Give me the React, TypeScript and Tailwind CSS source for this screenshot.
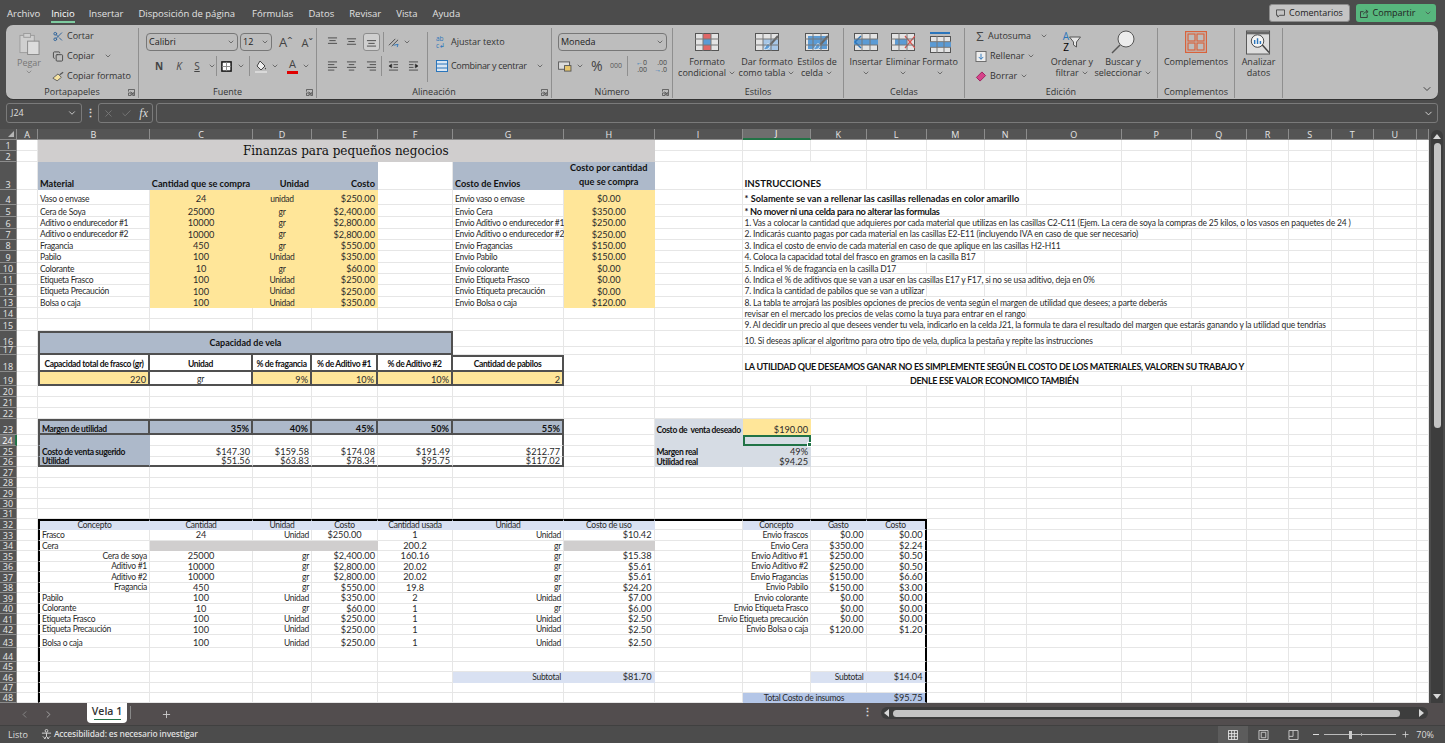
import type { ReactNode } from "react";
import { twMerge } from "tailwind-merge";
import { Check, ChevronDown, ChevronLeft, ChevronRight, Copy, Plus, Scissors, X } from "lucide-react";

type Cell = { t?: string; c?: string; s?: number; r?: number };

const LETTERS = "A B C D E F G H I J K L M N O P Q R S T U".split(" ").concat("");

// sheet fills
const BB = "font-bold text-[#111] text-[8.5px]/none tracking-[-0.35px]";
const YEL = "bg-[#ffe699] border-[#ffe699]";
const BLU = `bg-[#adb9ca] border-[#adb9ca] ${BB}`;
const PALE = "bg-[#d9e1f2] border-[#d9e1f2]";
const GRY = "bg-[#d0cece] border-[#d0cece]";
const STEEL = "bg-[#d6dce4] border-[#d6dce4]";
const CC = "justify-center";
const RR = "justify-end";
const H3 = "text-[9.2px]/none tracking-normal";
const INS = "text-[9.2px]/none tracking-normal";
const LINE = "tracking-[-0.17px]";
// dark boxed tables
const BOX = "border-r-2 border-b-2 border-r-[#505050] border-b-[#505050]";
const BL = "border-l-2 border-l-[#505050]";
const BT = "border-t-2 border-t-[#505050]";
// big black frame
const FL = "border-l-2 border-l-black";
const FR = "border-r-2 border-r-black";
const FT = "border-t-2 border-t-black";

const materials = [
  ["Cera de Soya", "25000", "gr", "$2,400.00", "Envio Cera", "$350.00", "* No mover ni una celda para no alterar las formulas", 4, `${BB} text-[9.2px]/none tracking-[-0.28px]`],
  ["Aditivo o endurecedor #1", "10000", "gr", "$2,800.00", "Envio Aditivo o endurecedor #1", "$250.00", "1. Vas a colocar la cantidad que adquieres por cada material que utilizas en las casillas C2-C11 (Ejem. La cera de soya la compras de 25 kilos, o los vasos en paquetes de 24 )", 11, LINE],
  ["Aditivo o endurecedor #2", "10000", "gr", "$2,800.00", "Envio Aditivo o endurecedor #2", "$250.00", "2. Indicarás cuanto pagas por cada material en las casillas E2-E11 (incluyendo IVA en caso de que ser necesario)", 7, LINE],
  ["Fragancia", "450", "gr", "$550.00", "Envio Fragancias", "$150.00", "3. Indica el costo de envio de cada material en caso de que aplique en las casillas H2-H11", 6, LINE],
  ["Pabilo", "100", "Unidad", "$350.00", "Envio Pabilo", "$150.00", "4. Coloca la capacidad total del frasco en gramos en la casilla B17", 4, LINE],
  ["Colorante", "10", "gr", "$60.00", "Envio colorante", "$0.00", "5. Indica el % de fragancia en la casilla D17", 3, LINE],
  ["Etiqueta Frasco", "100", "Unidad", "$250.00", "Envio Etiqueta Frasco", "$0.00", "6. Indica el % de aditivos que se van a usar en las casillas E17 y F17, si no se usa aditivo, deja en 0%", 6, LINE],
  ["Etiqueta Precaución", "100", "Unidad", "$250.00", "Envio Etiqueta precaución", "$0.00", "7. Indica la cantidad de pabilos que se van a utilizar", 3, LINE],
  ["Bolsa o caja", "100", "Unidad", "$350.00", "Envio Bolsa o caja", "$120.00", "8. La tabla te arrojará las posibles opciones de precios de venta según el margen de utilidad que desees; a parte deberás", 7, LINE],
] as const;

const usage = [
  ["Frasco", "24", "Unidad", "$250.00", "1", "Unidad", "$10.42", "Envio frascos", "$0.00", "$0.00"],
  ["Cera", "", "", "", "200.2", "gr", "", "Envio Cera", "$350.00", "$2.24"],
  [">Cera de soya", "25000", "gr", "$2,400.00", "160.16", "gr", "$15.38", "Envio Aditivo #1", "$250.00", "$0.50"],
  [">Aditivo #1", "10000", "gr", "$2,800.00", "20.02", "gr", "$5.61", "Envio Aditivo #2", "$250.00", "$0.50"],
  [">Aditivo #2", "10000", "gr", "$2,800.00", "20.02", "gr", "$5.61", "Envio Fragancias", "$150.00", "$6.60"],
  [">Fragancia", "450", "gr", "$550.00", "19.8", "gr", "$24.20", "Envio Pabilo", "$150.00", "$3.00"],
  ["Pabilo", "100", "Unidad", "$350.00", "2", "Unidad", "$7.00", "Envio colorante", "$0.00", "$0.00"],
  ["Colorante", "10", "gr", "$60.00", "1", "gr", "$6.00", "Envio Etiqueta Frasco", "$0.00", "$0.00"],
  ["Etiqueta Frasco", "100", "Unidad", "$250.00", "1", "Unidad", "$2.50", "Envio Etiqueta precaución", "$0.00", "$0.00"],
  ["Etiqueta Precaución", "100", "Unidad", "$250.00", "1", "Unidad", "$2.50", "Envio Bolsa o caja", "$120.00", "$1.20"],
  ["Bolsa o caja", "100", "Unidad", "$250.00", "1", "Unidad", "$2.50", "", "", ""],
];

function buildRows(): Record<number, { cells: Cell[]; occ?: number }> {
  const rows: Record<number, { cells: Cell[]; occ?: number }> = {};
  const blank: Cell = {};

  rows[1] = {
    cells: [
      blank,
      { t: "Finanzas para pequeños negocios", s: 7, r: 2, c: `${GRY} ${CC} items-center text-[12px]/none tracking-normal text-[#111] font-['DejaVu_Serif',serif]` },
    ],
  };
  rows[2] = { cells: [blank], occ: 7 };
  rows[3] = {
    cells: [
      blank,
      { t: "Material", c: `${BLU} ${H3}` },
      { t: "Cantidad que se compra", c: `${BLU} ${H3} ${CC}` },
      { t: "Unidad", c: `${BLU} ${H3} ${RR}` },
      { t: "Costo", c: `${BLU} ${H3} ${RR}` },
      blank,
      { t: "Costo de Envios", c: `${BLU} ${H3}` },
      { t: "Costo por cantidad que se compra", c: `${BLU} ${CC} text-center whitespace-normal text-[9.2px]/[14px] tracking-normal` },
      blank,
      { t: "INSTRUCCIONES", s: 2, c: `${BB} text-[9.7px]/none tracking-normal` },
    ],
  };
  rows[4] = {
    cells: [
      blank,
      { t: "Vaso o envase", c: "pb-[1px]" },
      { t: "24", c: `${YEL} ${CC} pb-[1px]` },
      { t: "unidad", c: `${YEL} ${CC} pb-[1px]` },
      { t: "$250.00", c: `${YEL} ${RR} pb-[1px]` },
      blank,
      { t: "Envio vaso o envase", c: "pb-[1px]" },
      { t: "$0.00", c: `${YEL} ${CC} pb-[1px]` },
      blank,
      { t: "* Solamente se van a rellenar las casillas rellenadas en color amarillo", s: 5, c: `${BB} ${INS} pb-[1px]` },
    ],
  };
  materials.forEach((m, i) => {
    rows[5 + i] = {
      cells: [
        blank,
        { t: m[0] },
        { t: m[1], c: `${YEL} ${CC}` },
        { t: m[2], c: `${YEL} ${CC}` },
        { t: m[3], c: `${YEL} ${RR}` },
        blank,
        { t: m[4] },
        { t: m[5], c: `${YEL} ${CC}` },
        blank,
        { t: m[6], s: m[7], c: m[8] },
      ],
    };
  });
  rows[14] = {
    cells: [
      ...Array(9).fill(blank),
      { t: "revisar en el mercado los precios de velas como la tuya para entrar en el rango", s: 5, c: "tracking-[-0.1px]" },
    ],
  };
  rows[15] = {
    cells: [
      ...Array(9).fill(blank),
      { t: "9. Al decidir un precio al que desees vender tu vela, indicarlo en la celda J21, la formula te dara el resultado del margen que estarás ganando y la utilidad que tendrías", s: 10, c: LINE },
    ],
  };
  rows[16] = {
    cells: [
      blank,
      { t: "Capacidad de vela", s: 5, r: 2, c: `${BLU} ${CC} items-center ${BOX} ${BL} ${BT} text-[9px]/none tracking-normal` },
      blank,
      blank,
      blank,
      { t: "10. Si deseas aplicar el algoritmo para otro tipo de vela, duplica la pestaña y repite las instrucciones", s: 6, c: `${LINE} pb-[1px]` },
    ],
  };
  rows[17] = { cells: [blank], occ: 5 };
  const head = `${CC} ${BB} pb-[1px] ${BOX}`;
  const shout = `${BB} ${CC} text-[9px]/none tracking-[-0.3px]`;
  rows[18] = {
    cells: [
      blank,
      { t: "Capacidad total de frasco (gr)", c: `${head} ${BL}` },
      { t: "Unidad", c: head },
      { t: "% de fragancia", c: head },
      { t: "% de Aditivo #1", c: head },
      { t: "% de Aditivo #2", c: head },
      { t: "Cantidad de pabilos", c: `${head} ${BT}` },
      blank,
      blank,
      { t: "LA UTILIDAD QUE DESEAMOS GANAR NO ES SIMPLEMENTE SEGÚN EL COSTO DE LOS MATERIALES, VALOREN SU TRABAJO Y", s: 8, c: shout },
    ],
  };
  rows[19] = {
    cells: [
      blank,
      { t: "220", c: `${YEL} ${RR} ${BOX} ${BL}` },
      { t: "gr", c: `${CC} ${BOX}` },
      { t: "9%", c: `${YEL} ${RR} ${BOX}` },
      { t: "10%", c: `${YEL} ${RR} ${BOX}` },
      { t: "10%", c: `${YEL} ${RR} ${BOX}` },
      { t: "2", c: `${YEL} ${RR} ${BOX}` },
      blank,
      blank,
      { t: "DENLE ESE VALOR ECONOMICO TAMBIÉN", s: 8, c: shout },
    ],
  };
  const mrg = `${BLU} ${RR} ${BT} ${BOX} text-[9.2px]/none tracking-normal`;
  rows[23] = {
    cells: [
      blank,
      { t: "Margen de utilidad", c: `${BLU} ${BT} ${BOX} ${BL}` },
      { t: "35%", c: mrg },
      { t: "40%", c: mrg },
      { t: "45%", c: mrg },
      { t: "50%", c: mrg },
      { t: "55%", c: mrg },
      blank,
      { t: "Costo de  venta deseado", c: `${STEEL} ${BB} whitespace-pre` },
      { t: "$190.00", c: `${YEL} ${RR}` },
    ],
  };
  rows[24] = {
    cells: [
      blank,
      { c: `${BLU} ${BL}` },
      blank,
      blank,
      blank,
      blank,
      { c: "border-r-2 border-r-[#505050]" },
      blank,
      { c: STEEL },
      { c: `${STEEL} relative border-2 border-[#217346] z-10` },
    ],
  };
  rows[25] = {
    cells: [
      blank,
      { t: "Costo de venta sugerido", c: `${BLU} ${BL}` },
      { t: "$147.30", c: RR },
      { t: "$159.58", c: RR },
      { t: "$174.08", c: RR },
      { t: "$191.49", c: RR },
      { t: "$212.77", c: `${RR} border-r-2 border-r-[#505050]` },
      blank,
      { t: "Margen real", c: `${STEEL} ${BB}` },
      { t: "49%", c: `${STEEL} ${RR}` },
    ],
  };
  const btm = `${RR} border-b-2 border-b-[#505050]`;
  rows[26] = {
    cells: [
      blank,
      { t: "Utilidad", c: `${BLU} ${BL} border-b-2 border-b-[#505050]` },
      { t: "$51.56", c: btm },
      { t: "$63.83", c: btm },
      { t: "$78.34", c: btm },
      { t: "$95.75", c: btm },
      { t: "$117.02", c: `${btm} border-r-2 border-r-[#505050]` },
      blank,
      { t: "Utilidad real", c: `${STEEL} ${BB}` },
      { t: "$94.25", c: `${STEEL} ${RR}` },
    ],
  };
  const top = `${PALE} ${CC} ${FT}`;
  rows[32] = {
    cells: [
      blank,
      { t: "Concepto", c: `${top} ${FL}` },
      { t: "Cantidad", c: top },
      { t: "Unidad", c: top },
      { t: "Costo", c: top },
      { t: "Cantidad usada", c: top },
      { t: "Unidad", c: top },
      { t: "Costo de uso", c: top },
      { c: FT },
      { t: "Concepto", c: top },
      { t: "Gasto", c: top },
      { t: "Costo", c: `${top} ${FR}` },
    ],
  };
  usage.forEach((u, i) => {
    const indent = u[0].startsWith(">");
    const cera = u[0] === "Cera";
    rows[33 + i] = {
      cells: [
        blank,
        { t: indent ? u[0].slice(1) : u[0], c: `${FL} ${indent ? RR : ""}` },
        ...(cera
          ? [{ s: 3, c: GRY }]
          : [
              { t: u[1], c: CC },
              { t: u[2], c: RR },
              { t: u[3], c: i === 0 ? CC : RR },
            ]),
        { t: u[4], c: CC },
        { t: u[5], c: RR },
        { t: u[6], c: cera ? GRY : RR },
        blank,
        { t: u[7], c: RR },
        { t: u[8], c: RR },
        { t: u[9], c: `${RR} ${FR}` },
      ],
    };
  });
  const framed = (n: number, extra: Cell[]) => {
    rows[n] = { cells: [blank, { c: FL }, ...extra] };
  };
  const plain = Array(9).fill(blank) as Cell[];
  framed(44, [...plain, { c: FR }]);
  framed(45, [...plain, { c: FR }]);
  framed(46, [
    ...Array(4).fill(blank),
    { t: "Subtotal", c: `${PALE} ${RR}` },
    { t: "$81.70", c: `${PALE} ${RR}` },
    blank,
    blank,
    { t: "Subtotal", c: `${PALE} ${RR}` },
    { t: "$14.04", c: `${PALE} ${RR} ${FR}` },
  ]);
  framed(47, [...plain, { c: FR }]);
  framed(48, [
    ...Array(7).fill(blank),
    { t: "Total Costo de insumos", s: 2, c: `bg-[#b4c6e7] border-[#b4c6e7] ${CC}` },
    { t: "$95.75", c: `bg-[#b4c6e7] border-[#b4c6e7] ${RR} ${FR}` },
  ]);
  return rows;
}

const HDR = "flex justify-center bg-[#545454] border-r border-b border-[#8c8c8c] text-[#e6e6e6] text-[9px]/none font-['Open_Sans',sans-serif]";
const NUM = /^\$?[\d.,]+%?$/;

function Sheet() {
  const rows = buildRows();
  const base = "flex items-end px-[2px] whitespace-nowrap text-[8.5px]/none tracking-[-0.28px] text-[#2a2a2a] bg-white border-r border-b border-[#e6e6e6] min-w-0";
  return (
    <div className="grid grid-cols-[17px_21px_112px_103px_59px_66px_75px_111px_90.5px_88px_68.5px_55.5px_60px_58.5px_41.5px_95.5px_69.5px_55.5px_42px_42.5px_42.5px_42.5px_12.5px] grid-rows-[11px_11px_11px_27.5px_15.5px_12.3px_11.35px_11.35px_11.35px_11.35px_11.35px_11.35px_11.35px_11.35px_11.35px_11.35px_16.3px_8px_16.7px_14px_10.8px_11px_11.2px_16.3px_11px_11px_10.3px_10.4px_10.6px_10.7px_10px_10.5px_10.8px_10.4px_10.6px_10.4px_10.3px_10.7px_10.3px_10.7px_10.3px_10.7px_10.3px_13.3px_13.4px_10.6px_10.4px_10.3px_10.5px] font-['Lato',sans-serif]">
      <div className={`${HDR} relative`}>
        <span className="absolute right-[2px] bottom-[2px] w-0 h-0 border-l-[6px] border-l-transparent border-b-[6px] border-b-[#b5b5b5]" />
      </div>
      {LETTERS.map((l) => (
        <div key={l || "end"} className={twMerge(HDR, "items-center", l === "J" ? "bg-[#6e6e6e] border-b-2 border-b-[#217346] text-white" : "")}>
          {l}
        </div>
      ))}
      {Array.from({ length: 48 }, (_, i) => i + 1).flatMap((n) => {
        const def = rows[n] ?? { cells: [] as Cell[] };
        const used = def.cells.reduce((sum, c) => sum + (c.s ?? 1), 0) + (def.occ ?? 0);
        const cells = [...def.cells, ...Array<Cell>(Math.max(0, 22 - used)).fill({})];
        return [
          <div key={`h${n}`} className={twMerge(HDR, "items-end", n === 24 ? "bg-[#6e6e6e] border-r-2 border-r-[#217346] text-white" : "")}>
            {n}
          </div>,
          ...cells.map((c, j) => (
            <div
              key={`${n}-${j}`}
              className={twMerge(base, SPANS[c.s ?? 1], c.r === 2 ? "row-span-2" : "", c.t && NUM.test(c.t) ? "text-[9.2px]/none tracking-normal" : "", c.c)}
            >
              {c.t}
              {n === 24 && j === 9 && <span className="absolute -right-[3px] -bottom-[3px] w-[5px] h-[5px] bg-[#217346] border border-white" />}
            </div>
          )),
        ];
      })}
    </div>
  );
}

const SPANS: Record<number, string> = {
  1: "",
  2: "col-span-2",
  3: "col-span-3",
  4: "col-span-4",
  5: "col-span-5",
  6: "col-span-6",
  7: "col-span-7",
  8: "col-span-8",
  10: "col-span-10",
  11: "col-span-11",
};

/* ribbon bits */
const Chev = ({ c = "" }: { c?: string }) => <ChevronDown size={8} strokeWidth={2} className={twMerge("text-[#444] shrink-0", c)} />;

function Launcher() {
  return (
    <svg viewBox="0 0 8 8" className="absolute right-[3px] bottom-[2px] w-[7px] h-[7px]" fill="none" stroke="#555" strokeWidth="1">
      <path d="M.5 3V.5H7.5V7.5H5M.5 4.5H3.5V7.5H.5ZM3 3L6 6M6 3.5V6H3.5" />
    </svg>
  );
}

function Group({ label, w, launcher, children }: { label?: string; w: string; launcher?: boolean; children: ReactNode }) {
  return (
    <div className={`relative flex flex-col shrink-0 ${w} mt-[3px] mb-[1px] border-r border-[#8f8f8f]`}>
      <div className="flex flex-1 min-h-0">{children}</div>
      <div className="h-[12px] text-center text-[9px] leading-[12px] text-[#333]">{label}</div>
      {launcher && <Launcher />}
    </div>
  );
}

function Big({ w, icon, lines, chev }: { w: string; icon: ReactNode; lines: string[]; chev?: boolean }) {
  return (
    <div className={`flex flex-col items-center shrink-0 ${w}`}>
      <div className="h-[26px] mt-[1px] flex items-center justify-center">{icon}</div>
      <div className="mt-[1px] text-[9px] leading-[11px] text-center text-[#333] whitespace-nowrap">
        {lines.map((l, i) => (
          <div key={l} className="flex items-center justify-center gap-[2px] h-[11px]">
            {l}
            {chev && i === lines.length - 1 && <Chev />}
          </div>
        ))}
      </div>
    </div>
  );
}

const Sep = () => <div className="w-px h-[20px] bg-[#8f8f8f] shrink-0" />;

function Combo({ w, text, c = "" }: { w: string; text: string; c?: string }) {
  return (
    <div className={`flex items-center justify-between ${w} h-[18px] px-[2px] border border-[#777] rounded-[4px] text-[9px] text-[#222] ${c}`}>
      {text}
      <Chev />
    </div>
  );
}

function VAlign({ at }: { at: number }) {
  return (
    <svg viewBox="0 0 12 11" className="w-[11px] h-[10px]" stroke="#444" strokeWidth="1">
      <path d={`M1 ${at}H11M2.5 ${at + 3}H9.5M1 ${at + 6}H11`} />
    </svg>
  );
}

function HAlign({ d }: { d: string }) {
  return (
    <svg viewBox="0 0 12 11" className="w-[11px] h-[10px]" stroke="#444" strokeWidth="1">
      <path d={d} />
    </svg>
  );
}

function Tbl({ children, w = 24, h = 18 }: { children?: ReactNode; w?: number; h?: number }) {
  return (
    <svg viewBox={`0 0 ${w} ${h}`} width={w} height={h}>
      <rect x=".5" y=".5" width={w - 1} height={h - 1} fill="#e4e4e4" stroke="#555" />
      {children}
      <path d={`M${w / 3} 0V${h}M${(w * 2) / 3} 0V${h}M0 ${h / 3}H${w}M0 ${(h * 2) / 3}H${w}`} stroke="#777" />
    </svg>
  );
}

const Brush = () => (
  <svg x="0" y="0" width="24" height="18" viewBox="0 0 24 18">
    <path d="M23 3L15 12" stroke="#666" strokeWidth="2.2" />
    <path d="M12 11c3-1 4 2 2 4s-5 2-6 1c2 0 2-3 4-5z" fill="#5b9bd5" stroke="#fff" strokeWidth=".7" />
  </svg>
);

function Ribbon() {
  return (
    <div className="flex h-[74px] ml-[6px] mr-[7px] rounded-[7px] bg-[#bdbdbd] font-['Open_Sans',sans-serif] shadow-[0_1px_0_#333]">
      <Group label="Portapapeles" w="w-[133px]" launcher>
        <div className="flex flex-col items-center w-[46px] pt-[4px] shrink-0 text-[9px] leading-[11px] text-[#777]">
          <svg viewBox="0 0 22 24" width="21" height="24" className="mb-[1px]">
            <rect x="1" y="3" width="15" height="18" fill="#cfcfcf" stroke="#9c9c9c" />
            <rect x="5" y="1" width="7" height="4" fill="#cfcfcf" stroke="#9c9c9c" />
            <rect x="9" y="9" width="12" height="14" fill="#dcdcdc" stroke="#8a8a8a" />
          </svg>
          Pegar
          <Chev c="text-[#777]" />
        </div>
        <div className="flex flex-col -mt-[2px] text-[9px] text-[#333]">
          <div className="flex items-center h-[20px] gap-[3px]"><Scissors size={11} className="text-[#2a6099] w-[12px]" />Cortar</div>
          <div className="flex items-center h-[20px] gap-[3px]"><Copy size={11} className="text-[#444] w-[12px]" />Copiar<Chev c="ml-[6px]" /></div>
          <div className="flex items-center h-[20px] gap-[3px]">
            <svg viewBox="0 0 14 12" className="w-[12px] h-[11px]"><path d="M1 8L7 3l4 4-5 4z" fill="#f6e3a1" stroke="#555" /><path d="M9 4l4-3" stroke="#555" strokeWidth="1.5" /></svg>
            Copiar formato
          </div>
        </div>
      </Group>
      <Group label="Fuente" w="w-[178px]" launcher>
        <div className="flex flex-col pl-[7px] pt-[5px]">
          <div className="flex items-center gap-[2px] h-[18px]">
            <Combo w="w-[92px]" text="Calibri" />
            <Combo w="w-[32px]" text="12" />
            <span className="ml-[5px] text-[13px] text-[#444] leading-none">Aˆ</span>
            <span className="ml-[7px] text-[11px] text-[#444] leading-none">Aˇ</span>
          </div>
          <div className="flex items-center h-[22px] mt-[4px] text-[#444]">
            <span className="w-[20px] ml-[3px] text-center text-[10px] font-bold">N</span>
            <span className="w-[20px] text-center text-[10px] italic">K</span>
            <span className="w-[16px] text-center text-[10px] underline">S</span>
            <Chev c="ml-[3px]" />
            <Sep />
            <svg viewBox="0 0 12 12" className="w-[11px] h-[11px] ml-[4px] mr-[5px]"><rect x="1" y="1" width="10" height="10" fill="#fff" stroke="#111" strokeWidth="1.6" /><path d="M6 1V11M1 6H11" stroke="#888" /></svg>
            <Chev />
            <div className="w-px h-[20px] bg-[#8f8f8f] ml-[4px]" />
            <svg viewBox="0 0 12 13" className="w-[12px] h-[13px] ml-[5px] mr-[4px]"><path d="M5 1l5 5-4 4-4-4z" fill="#efefef" stroke="#444" /><path d="M10.5 7.5c-.8 1-.8 1.8 0 1.8s.8-.8 0-1.8z" fill="#444" /><rect y="11" width="12" height="2" fill="#d9d9d9" /></svg>
            <Chev />
            <span className="relative ml-[8px] mr-[4px] w-[11px] text-center text-[11px] leading-none pb-[2px] border-b-[3px] border-[#e00000]">A</span>
            <Chev />
          </div>
        </div>
      </Group>
      <Group label="Alineación" w="w-[235px]" launcher>
        <div className="flex flex-col pl-[10px] pt-[5px] w-[110px] shrink-0">
          <div className="flex items-center h-[18px]">
            <span className="w-[19px]"><VAlign at={1} /></span>
            <span className="w-[17px]"><VAlign at={2} /></span>
            <span className="flex items-center justify-center w-[17px] h-[18px] border border-[#8c8c8c] rounded-[3px] bg-[#cfcfcf]"><VAlign at={4} /></span>
            <span className="ml-[3px]"><Sep /></span>
            <svg viewBox="0 0 14 12" className="w-[13px] h-[11px] ml-[3px] mr-[3px]"><path d="M2 9L9 2M5 10L12 3" stroke="#444" /><path d="M7 9l5-1-1 3" stroke="#2a75bb" fill="none" /></svg>
            <Chev />
          </div>
          <div className="flex items-center h-[18px] mt-[6px]">
            <span className="w-[19px]"><HAlign d="M1 1H11M1 4H8M1 7H11M1 10H8" /></span>
            <span className="w-[20px]"><HAlign d="M1 1H11M3 4H9M1 7H11M3 10H9" /></span>
            <span className="w-[15px]"><HAlign d="M1 1H11M4 4H11M1 7H11M4 10H11" /></span>
            <Sep />
            <span className="w-[19px] pl-[6px]"><HAlign d="M1 1H11M6 4H11M6 7H11M1 10H11M1 5.5L4 3.5V7.5Z" /></span>
            <span className="w-[19px] pl-[7px]"><HAlign d="M1 1H11M1 4H6M1 7H6M1 10H11M11 5.5L8 3.5V7.5Z" /></span>
          </div>
        </div>
        <div className="h-[50px] w-px bg-[#8f8f8f] mt-[4px]" />
        <div className="flex flex-col pl-[8px] pt-[5px] text-[9px] text-[#333]">
          <div className="flex items-center gap-[3px] h-[18px]">
            <span className="w-[12px] text-[6.5px] leading-[7px] text-[#2a75bb]">ab<br />c↲</span>
            Ajustar texto
          </div>
          <div className="flex items-center gap-[3px] h-[18px] mt-[6px] tracking-[-0.3px]">
            <svg viewBox="0 0 12 12" className="w-[12px] h-[12px]"><rect x=".5" y=".5" width="11" height="11" fill="#dbe7f3" stroke="#2a75bb" /><path d="M.5 4H11.5M.5 8H11.5" stroke="#2a75bb" /></svg>
            Combinar y centrar
            <Chev c="ml-[6px]" />
          </div>
        </div>
      </Group>
      <Group label="Número" w="w-[121px]" launcher>
        <div className="flex flex-col pl-[6px] pt-[5px] text-[#444]">
          <Combo w="w-[109px]" text="Moneda" />
          <div className="flex items-center h-[20px] mt-[5px]">
            <svg viewBox="0 0 15 12" className="w-[14px] h-[11px]"><rect x=".5" y="1" width="12" height="8" fill="#dcdcdc" stroke="#555" /><rect x="7" y="5" width="7" height="6" fill="#e8c66b" stroke="#555" /></svg>
            <Chev c="ml-[4px]" />
            <span className="ml-[7px] w-[13px] text-[14px] leading-none">%</span>
            <span className="ml-[6px] w-[14px] text-[7px] text-[#555]">000</span>
            <div className="w-px h-[20px] bg-[#8f8f8f] ml-[3px]" />
            <span className="ml-[5px] w-[14px] text-[7px] leading-[7px] text-right"><span className="text-[#2a75bb]">←</span>0<br />.00</span>
            <span className="ml-[6px] w-[14px] text-[7px] leading-[7px] text-right">.00<br /><span className="text-[#2a75bb]">→</span>.0</span>
          </div>
        </div>
      </Group>
      <Group label="Estilos" w="w-[171px]">
        <Big w="w-[68px]" lines={["Formato", "condicional"]} chev icon={<Tbl><rect x="8" y="1" width="8" height="5" fill="#e06666" /><rect x="8" y="12" width="8" height="5" fill="#e06666" /><rect x="8" y="6" width="8" height="6" fill="#5b9bd5" /></Tbl>} />
        <Big w="w-[52px]" lines={["Dar formato", "como tabla"]} chev icon={<Tbl><rect x="8" y="6" width="15" height="11" fill="#a7c7e7" /><Brush /></Tbl>} />
        <Big w="w-[48px]" lines={["Estilos de", "celda"]} chev icon={<Tbl><rect x="3" y="3" width="19" height="13" fill="#5b9bd5" /><Brush /></Tbl>} />
      </Group>
      <Group label="Celdas" w="w-[121px]">
        <Big w="w-[44px]" lines={["Insertar", ""]} chev icon={<Tbl><rect x="0" y="6" width="24" height="6" fill="#5b9bd5" /><path d="M7 3L1 9l6 6" fill="none" stroke="#2a75bb" strokeWidth="1.5" /></Tbl>} />
        <Big w="w-[30px]" lines={["Eliminar", ""]} chev icon={<Tbl><rect x="4" y="6" width="12" height="6" fill="#5b9bd5" /><path d="M14 3L24 15M24 3L14 15" stroke="#d9534f" strokeWidth="1.3" /></Tbl>} />
        <Big w="w-[44px]" lines={["Formato", ""]} chev icon={<div className="flex flex-col items-center"><div className="w-[20px] h-[2px] mb-[2px] bg-[#2a75bb]" /><Tbl w={21} h={17}><rect x="0" y="6" width="21" height="5" fill="#5b9bd5" /></Tbl></div>} />
      </Group>
      <Group label="Edición" w="w-[193px]">
        <div className="flex flex-col -mt-[2px] pl-[10px] w-[83px] shrink-0 text-[9px] text-[#333]">
          <div className="flex items-center h-[20px] gap-[3px]"><span className="w-[12px] text-[13px] leading-none text-center text-[#444]">Σ</span>Autosuma<Chev c="ml-[6px]" /></div>
          <div className="flex items-center h-[20px] gap-[3px]"><svg viewBox="0 0 12 12" className="w-[12px] h-[11px]"><rect x=".5" y=".5" width="11" height="11" fill="#eee" stroke="#666" /><path d="M6 3V9M3.5 6.5L6 9l2.5-2.5" fill="none" stroke="#2a75bb" /></svg>Rellenar<Chev /></div>
          <div className="flex items-center h-[20px] gap-[3px]"><svg viewBox="0 0 12 12" className="w-[12px] h-[11px]"><path d="M1 7L7 1l4 4-6 6z" fill="#d6438a" stroke="#9c1c5b" /></svg>Borrar<Chev /></div>
        </div>
        <Big w="w-[48px]" lines={["Ordenar y", "filtrar"]} chev icon={
          <div className="flex items-center">
            <span className="text-[10px] leading-[11px] text-center"><span className="text-[#2a75bb]">A</span><br />Z</span>
            <svg viewBox="0 0 12 12" className="w-[12px] h-[12px]"><path d="M.5 1H11.5L7.5 6V11L4.5 9V6z" fill="#e6e6e6" stroke="#555" /></svg>
          </div>
        } />
        <Big w="w-[54px]" lines={["Buscar y", "seleccionar"]} chev icon={
          <svg viewBox="0 0 24 24" width="24" height="24"><circle cx="15" cy="9" r="8" fill="#ececec" stroke="#555" /><path d="M9 15L1 23" stroke="#555" strokeWidth="1.4" /></svg>
        } />
      </Group>
      <Group label="Complementos" w="w-[77px]">
        <Big w="w-full" lines={["Complementos"]} icon={
          <svg viewBox="0 0 22 22" width="22" height="22" fill="none" stroke="#d9623b" strokeWidth="1.2"><rect x=".6" y=".6" width="20.8" height="20.8" /><rect x="3" y="3" width="7" height="7" /><rect x="12" y="3" width="7" height="7" /><rect x="3" y="12" width="7" height="7" /><rect x="12" y="12" width="7" height="7" /></svg>
        } />
      </Group>
      <Group w="w-[48px]">
        <Big w="w-full" lines={["Analizar", "datos"]} icon={
          <svg viewBox="0 0 26 25" width="25" height="25"><rect x=".5" y=".5" width="24" height="24" fill="#ddd" stroke="#555" /><rect x="1" y="1" width="23" height="3" fill="#666" /><circle cx="12" cy="11" r="6.5" fill="#f4f4f4" stroke="#444" /><path d="M9 14V10M12 14V8M15 14V11" stroke="#2a75bb" strokeWidth="1.5" /><path d="M17 15L24 23" stroke="#444" strokeWidth="1.5" /></svg>
        } />
      </Group>
      <div className="flex flex-1 items-end justify-end pr-[5px] pb-[4px]"><ChevronDown size={12} className="text-[#444]" /></div>
    </div>
  );
}

function TitleBar() {
  const tabs = [
    ["Archivo", "ml-[7px]"],
    ["Inicio", "ml-[11px] text-white border-b-2 border-[#7ecba0]"],
    ["Insertar", "ml-[14px]"],
    ["Disposición de página", "ml-[15px]"],
    ["Fórmulas", "ml-[17px]"],
    ["Datos", "ml-[15px]"],
    ["Revisar", "ml-[15px]"],
    ["Vista", "ml-[15px]"],
    ["Ayuda", "ml-[15px]"],
  ];
  return (
    <div className="flex items-start h-[25px] font-['Open_Sans',sans-serif] text-[9.5px] text-[#e2e2e2]">
      {tabs.map(([t, c]) => (
        <span key={t} className={`mt-[6px] h-[17px] leading-[15px] ${c}`}>{t}</span>
      ))}
      <div className="ml-auto flex mt-[4px] mr-[9px] gap-[6px] text-[#222] text-[9px]">
        <div className="flex items-center justify-center gap-[4px] w-[81px] h-[18px] bg-[#c4c4c4] rounded-[3px] border border-[#8c8c8c]">
          <svg viewBox="0 0 10 10" className="w-[9px] h-[9px]" fill="none" stroke="#444"><path d="M.5 1H9.5V7H4L2 9V7H.5z" /></svg>
          Comentarios
        </div>
        <div className="flex items-center justify-center gap-[4px] w-[80px] h-[18px] bg-[#57b67d] rounded-[3px]">
          <svg viewBox="0 0 10 10" className="w-[9px] h-[9px]" fill="none" stroke="#333"><path d="M.5 3H4M.5 3V9.5H8V6M4 6c0-2 2-3 4-3M6.5 1L9 3 6.5 5" /></svg>
          Compartir
          <Chev c="ml-[5px]" />
        </div>
      </div>
    </div>
  );
}

function FormulaBar() {
  return (
    <div className="flex items-center h-[30px] pl-[6px] pr-[7px] pt-[2px] pb-[4px] text-[#ddd] font-['Open_Sans',sans-serif]">
      <div className="flex items-center justify-between w-[76px] h-[20px] px-[4px] border border-[#7a7a7a] rounded-[3px] text-[9px]">
        J24
        <ChevronDown size={10} />
      </div>
      <span className="w-[16px] text-center text-[11px] font-bold">⋮</span>
      <div className="flex items-center justify-between w-[55px] h-[20px] px-[4px] border border-[#7a7a7a] rounded-[3px]">
        <X size={11} className="text-[#777]" />
        <Check size={11} className="text-[#777]" />
        <span className="text-[12px] italic font-['Liberation_Serif',serif] leading-none">fx</span>
      </div>
      <div className="flex flex-1 items-center justify-end ml-[3px] h-[20px] pr-[3px] border border-[#7a7a7a] rounded-[3px]">
        <ChevronDown size={11} />
      </div>
    </div>
  );
}

function VScroll() {
  return (
    <div className="flex flex-col items-center w-[12px] mr-[2px] ml-[2px] mt-[1px] bg-[#3d3d3d] rounded-t-[6px]">
      <div className="w-0 h-0 mt-[4px] border-x-[4px] border-x-transparent border-b-[5px] border-b-[#d8d8d8]" />
      <div className="w-[7px] h-[285px] mt-[4px] rounded-[4px] bg-[#c4c4c4]" />
      <div className="flex-1" />
      <div className="w-0 h-0 mb-[4px] border-x-[4px] border-x-transparent border-t-[5px] border-t-[#d8d8d8]" />
    </div>
  );
}

function SheetTabs() {
  return (
    <div className="flex items-start h-[22px] bg-[#524d4e] font-['Open_Sans',sans-serif] text-[#bbb]">
      <ChevronLeft size={11} className="ml-[19px] mt-[6px] text-[#8a8a8a]" />
      <ChevronRight size={11} className="ml-[13px] mt-[6px] text-[#aaa]" />
      <div className="ml-[33px] flex flex-col items-center justify-start w-[40px] h-[20px] pt-[1px] bg-white rounded-b-[4px] text-[10.5px] font-semibold text-[#333] leading-[15px]">
        Vela 1
        <div className="w-[27px] h-[1px] bg-[#217346]" />
      </div>
      <div className="w-px h-[13px] mt-[3px] ml-[3px] bg-[#888]" />
      <Plus size={11} className="ml-[30px] mt-[6px] text-[#ccc]" />
      <span className="ml-auto mr-[8px] mt-[3px] text-[11px] font-bold text-[#ddd] leading-none">⋮</span>
      <div className="flex items-center w-[547px] h-[12px] mt-[4px] mr-[17px] px-[1px] rounded-[6px] bg-[#3d3d3d]">
        <div className="w-0 h-0 ml-[2px] border-y-[4px] border-y-transparent border-r-[5px] border-r-[#d8d8d8]" />
        <div className="w-[507px] h-[7px] ml-[4px] rounded-[4px] bg-[#c4c4c4]" />
        <div className="flex-1" />
        <div className="w-0 h-0 mr-[3px] border-y-[4px] border-y-transparent border-l-[5px] border-l-[#d8d8d8]" />
      </div>
    </div>
  );
}

function StatusBar() {
  return (
    <div className="flex items-center h-[18px] border-t border-[#404040] pl-[8px] font-['Open_Sans',sans-serif] text-[9px] text-[#ddd]">
      Listo
      <svg viewBox="0 0 12 12" className="w-[11px] h-[11px] ml-[13px] mr-[2px]" fill="none" stroke="#ddd"><circle cx="6" cy="2" r="1.5" /><path d="M1 4.5H11M6 4.5V8M3.5 11L6 8l2.5 3M2 8l3 3M10 8l-3 3" /></svg>
      <span className="text-[8.5px] font-semibold tracking-[-0.2px]">Accesibilidad: es necesario investigar</span>
      <div className="flex items-center ml-auto h-full">
        <div className="flex items-center justify-center w-[30px] h-full bg-[#5c5c5c]">
          <svg viewBox="0 0 11 11" className="w-[10px] h-[10px]" fill="none" stroke="#e8e8e8"><path d="M.5.5H10.5V10.5H.5ZM4 .5V10.5M7 .5V10.5M.5 4H10.5M.5 7H10.5" /></svg>
        </div>
        <div className="flex items-center justify-center w-[30px]">
          <svg viewBox="0 0 11 11" className="w-[11px] h-[10px]" fill="none" stroke="#ccc"><path d="M.5.5H10.5V10.5H.5ZM3 2.5H8V8.5H3Z" /></svg>
        </div>
        <div className="flex items-center justify-center w-[30px]">
          <svg viewBox="0 0 11 11" className="w-[11px] h-[10px]" fill="none" stroke="#ccc"><path d="M.5 7V.5H10.5V10.5H.5V7H5V.5" /></svg>
        </div>
        <div className="w-[6px] h-px ml-[5px] bg-[#ddd]" />
        <div className="relative w-[72px] h-px mx-[5px] bg-[#bbb]">
          <div className="absolute left-[25px] -top-[3px] w-[3px] h-[8px] bg-[#ccc]" />
          <div className="absolute left-[37px] -top-[1px] w-px h-[3px] bg-[#aaa]" />
        </div>
        <Plus size={9} className="text-[#ddd]" />
        <span className="w-[35px] pr-[11px] text-right">70%</span>
      </div>
    </div>
  );
}

export default function App() {
  return (
    <div className="flex flex-col w-[1445px] h-[743px] overflow-hidden bg-[#4c4c4c]">
      <TitleBar />
      <Ribbon />
      <FormulaBar />
      <div className="flex h-[574px] overflow-hidden">
        <div className="w-[1429px] shrink-0 overflow-hidden">
          <Sheet />
        </div>
        <VScroll />
      </div>
      <SheetTabs />
      <StatusBar />
    </div>
  );
}
